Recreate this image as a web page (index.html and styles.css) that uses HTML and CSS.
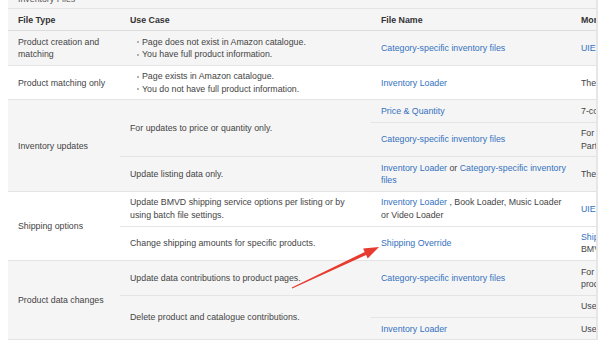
FILE: index.html
```html
<!DOCTYPE html>
<html lang="en">
<head>
<meta charset="utf-8">
<title>Inventory Files</title>
<link rel="stylesheet" href="styles.css">
</head>
<body>
<div class="page">
  <div class="frame">
    <div class="caption"><span>Inventory Files</span></div>
    <table class="files">
      <colgroup>
        <col class="c-type"><col class="c-use"><col class="c-file"><col class="c-more">
      </colgroup>
      <thead>
        <tr><th>File Type</th><th>Use Case</th><th>File Name</th><th>More Information</th></tr>
      </thead>
      <tbody class="grey">
        <tr>
          <td>Product creation and matching</td>
          <td><ul class="bullets"><li>Page does not exist in Amazon catalogue.</li><li>You have full product information.</li></ul></td>
          <td class="file"><a href="#">Category-specific inventory files</a></td>
          <td class="more"><a href="#">UIEE Inventory Loader</a></td>
        </tr>
      </tbody>
      <tbody class="white">
        <tr>
          <td>Product matching only</td>
          <td><ul class="bullets"><li>Page exists in Amazon catalogue.</li><li>You do not have full product information.</li></ul></td>
          <td class="file"><a href="#">Inventory Loader</a></td>
          <td class="more">The Inventory Loader file</td>
        </tr>
      </tbody>
      <tbody class="grey">
        <tr>
          <td rowspan="3">Inventory updates</td>
          <td rowspan="2">For updates to price or quantity only.</td>
          <td class="file"><a href="#">Price &amp; Quantity</a></td>
          <td class="more">7-column price and quantity template</td>
        </tr>
        <tr>
          <td class="file"><a href="#">Category-specific inventory files</a></td>
          <td class="more">For most categories.<br>Partial updates only.</td>
        </tr>
        <tr>
          <td>Update listing data only.</td>
          <td class="file"><a href="#">Inventory Loader</a> or <a href="#">Category-specific inventory files</a></td>
          <td class="more">The file you originally used.</td>
        </tr>
      </tbody>
      <tbody class="white">
        <tr>
          <td rowspan="2">Shipping options</td>
          <td>Update BMVD shipping service options per listing or by using batch file settings.</td>
          <td class="file"><a href="#">Inventory Loader</a> , Book Loader, Music Loader or&nbsp;Video&nbsp;Loader</td>
          <td class="more"><a href="#">UIEE Inventory Loader</a></td>
        </tr>
        <tr>
          <td>Change shipping amounts for specific products.</td>
          <td class="file"><a href="#">Shipping Override</a></td>
          <td class="more"><a href="#">Shipping Override</a><br>BMVD products only.</td>
        </tr>
      </tbody>
      <tbody class="grey">
        <tr>
          <td rowspan="3">Product data changes</td>
          <td>Update data contributions to product pages.</td>
          <td class="file"><a href="#">Category-specific inventory files</a></td>
          <td class="more">For specific categories of<br>products.</td>
        </tr>
        <tr>
          <td rowspan="2">Delete product and catalogue contributions.</td>
          <td class="file"></td>
          <td class="more">Use the delete column.</td>
        </tr>
        <tr>
          <td class="file"><a href="#">Inventory Loader</a></td>
          <td class="more">Use the add-delete column.</td>
        </tr>
      </tbody>
    </table>
  </div>
  <svg class="arrow" width="598" height="340" viewBox="0 0 598 340" aria-hidden="true">
    <polygon points="291.8,287.5 364.7,252.0 363.1,248.4 379,247 367.7,258.4 366.1,254.9 292.2,288.5" fill="#e63b2e"/>
  </svg>
</div>
</body>
</html>
```

FILE: styles.css
```css
* { box-sizing: border-box; }

body {
  margin: 0;
  background: #fff;
  font-family: "Liberation Sans", Arial, sans-serif;
  font-size: 8.8px;
  color: #444;
}

.page {
  position: relative;
  width: 598px;
  height: 340px;
  overflow: hidden;
  padding-left: 8px;
}

.frame {
  width: 590px;
  height: 340px;
  overflow: hidden;
  border-right: 2px solid #e6e6e6;
}

.caption {
  height: 9px;
  overflow: hidden;
  background: #f5f5f5;
  border-bottom: 1px solid #e4e4e4;
}

.caption span {
  display: block;
  margin-top: -6px;
  padding-left: 10px;
  line-height: 11px;
  color: #555;
}

.files {
  width: 780px;
  table-layout: fixed;
  border-collapse: collapse;
}

.c-type { width: 112px; }
.c-use { width: 251px; }
.c-file { width: 200px; }
.c-more { width: 217px; }

.files th,
.files td {
  padding: 4.5px 10px;
  line-height: 12.3px;
  text-align: left;
  vertical-align: middle;
  border-bottom: 1px solid #e4e4e4;
}

.files th {
  background: #f5f5f5;
  color: #333;
  font-weight: bold;
  border-bottom-color: #dcdcdc;
}

.files td.file {
  padding-right: 2px;
}

.files td.more {
  white-space: nowrap;
}

.grey td { background: #f5f5f5; }
.white td { background: #fff; }

a {
  color: #3471c0;
  text-decoration: none;
}

.bullets {
  margin: 0;
  padding: 0 0 0 12px;
  list-style: none;
}

.bullets li {
  position: relative;
}

.bullets li::before {
  content: "";
  position: absolute;
  left: -5px;
  top: 5.5px;
  width: 2px;
  height: 2px;
  border-radius: 50%;
  background: #999;
}

.arrow {
  position: absolute;
  left: 0;
  top: 0;
  pointer-events: none;
}
```
